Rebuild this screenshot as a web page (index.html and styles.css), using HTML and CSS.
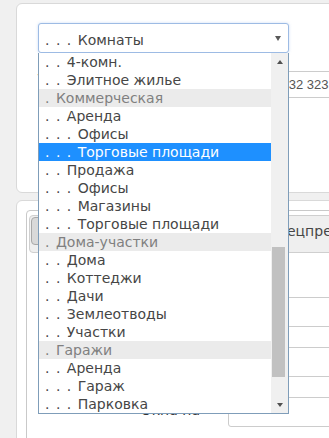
FILE: index.html
```html
<!DOCTYPE html>
<html lang="ru">
<head>
    <meta charset="UTF-8">
    <meta name="viewport" content="width=device-width, initial-scale=1.0">
    <title>Объект недвижимости</title>
    <link rel="stylesheet" href="styles.css">
</head>
<body>
    <div class="page">
        <div class="card card-top">
            <div class="select-wrap">
                <div class="select">
                    <span class="select-text"><span class="lvl">. . . </span>Комнаты</span>
                    <span class="arrow-down"></span>
                </div>
                <div class="dropdown">
                    <ul class="options">
                        <li><span class="lvl">. . </span>4-комн.</li>
                        <li><span class="lvl">. . </span>Элитное жилье</li>
                        <li class="group"><span class="lvl">. </span>Коммерческая</li>
                        <li><span class="lvl">. . </span>Аренда</li>
                        <li><span class="lvl">. . . </span>Офисы</li>
                        <li class="active"><span class="lvl">. . . </span>Торговые площади</li>
                        <li><span class="lvl">. . </span>Продажа</li>
                        <li><span class="lvl">. . . </span>Офисы</li>
                        <li><span class="lvl">. . . </span>Магазины</li>
                        <li><span class="lvl">. . . </span>Торговые площади</li>
                        <li class="group"><span class="lvl">. </span>Дома-участки</li>
                        <li><span class="lvl">. . </span>Дома</li>
                        <li><span class="lvl">. . </span>Коттеджи</li>
                        <li><span class="lvl">. . </span>Дачи</li>
                        <li><span class="lvl">. . </span>Землеотводы</li>
                        <li><span class="lvl">. . </span>Участки</li>
                        <li class="group"><span class="lvl">. </span>Гаражи</li>
                        <li><span class="lvl">. . </span>Аренда</li>
                        <li><span class="lvl">. . . </span>Гараж</li>
                        <li><span class="lvl">. . . </span>Парковка</li>
                    </ul>
                    <div class="scrollbar">
                        <div class="sb-btn"><span class="sb-up"></span></div>
                        <div class="sb-track"><div class="sb-thumb"></div></div>
                        <div class="sb-btn"><span class="sb-down"></span></div>
                    </div>
                </div>
            </div>
            <div class="form-row phone-row">
                <label>Телефон</label>
                <div class="input phone">8 (932) 32 323 23</div>
            </div>
        </div>

        <div class="card card-bottom">
            <div class="box">
                <div class="tabs">
                    <span class="tab tab-active">Основное</span>
                    <span class="tab tab-special">Спецпредложение</span>
                </div>
                <div class="form">
                    <label>Цена</label>
                    <div class="input"></div>
                    <label>Площадь</label>
                    <div class="input"></div>
                    <label class="label-low">Окна на</label>
                    <div class="input"></div>
                </div>
            </div>
        </div>
    </div>
</body>
</html>
```

FILE: styles.css
```css
html, body {
    overflow: hidden;
}
body {
    margin: 0;
    background-color: #f0f0f0;
    font-family: "DejaVu Sans", sans-serif;
    font-size: 14px;
    color: #464646;
}
.page {
    padding: 3px 0 0 16px;
    width: 360px;
}
.card {
    box-sizing: border-box;
    width: 340px;
    background-color: #fff;
    border: 1px solid #d9d9d9;
    border-radius: 6px;
}
.card-top {
    height: 190px;
    padding: 19px 0 0 21px;
}
.card-bottom {
    margin-top: 7px;
    height: 260px;
    padding: 9px 0 0 9px;
}

/* select with the open list */
.select-wrap {
    position: relative;
    width: 251px;
}
.select {
    box-sizing: border-box;
    height: 30px;
    display: flex;
    align-items: center;
    justify-content: space-between;
    padding: 4px 7px 0 6px;
    border: 1px solid #9dbbe4;
    border-radius: 3px;
    box-shadow: 0 0 3px rgba(110, 160, 225, 0.35);
    background-color: #fff;
}
.select-text {
    white-space: nowrap;
}
.lvl {
    letter-spacing: 1px;
}
.arrow-down {
    margin-top: -3px;
    border-left: 3.5px solid transparent;
    border-right: 3.5px solid transparent;
    border-top: 5px solid #5a5a5a;
}
.dropdown {
    position: absolute;
    left: 0;
    top: 30px;
    z-index: 10;
    box-sizing: border-box;
    width: 251px;
    height: 361px;
    display: flex;
    background-color: #fff;
    border: 1px solid #7f9db9;
    border-top: none;
}
.options {
    flex: 1;
    list-style: none;
    margin: 0;
    padding: 0;
    overflow: hidden;
}
.options li {
    height: 18px;
    line-height: 18px;
    padding-left: 6px;
    white-space: nowrap;
}
.options li.group {
    background-color: #ebebeb;
    color: #808080;
}
.options li.active {
    background-color: #1e90ff;
    color: #fff;
}
.scrollbar {
    width: 17px;
    display: flex;
    flex-direction: column;
    background-color: #f0f0f0;
}
.sb-btn {
    height: 17px;
    display: flex;
    align-items: center;
    justify-content: center;
}
.sb-up {
    border-left: 3.5px solid transparent;
    border-right: 3.5px solid transparent;
    border-bottom: 4px solid #505050;
}
.sb-down {
    border-left: 3.5px solid transparent;
    border-right: 3.5px solid transparent;
    border-top: 4px solid #505050;
}
.sb-track {
    flex: 1;
}
.sb-thumb {
    width: 13px;
    height: 130px;
    margin: 177px 0 0 1px;
    background-color: #c1c1c1;
}

/* form rows */
.form-row {
    display: grid;
    grid-template-columns: 182px 1fr;
    gap: 8px;
}
.phone-row {
    margin-top: 18px;
}
.input {
    box-sizing: border-box;
    height: 30px;
    border: 1px solid #cccccc;
    border-radius: 3px;
    background-color: #fff;
}
.phone {
    height: 27px;
    padding: 0 15px;
    line-height: 25px;
    font-family: "Liberation Sans", Arial, sans-serif;
    font-size: 13px;
    color: #555;
    white-space: nowrap;
}

/* tabs box */
.box {
    box-sizing: border-box;
    height: 300px;
    padding: 4px 0 0 2px;
    border: 1px solid #c9c9c9;
    border-radius: 4px;
}
.tabs {
    box-sizing: border-box;
    height: 38px;
    display: flex;
    align-items: flex-start;
    padding: 1px 0 0 1px;
    border: 1px solid #cfcfcf;
    border-radius: 4px;
    background-color: #efefef;
}
.tab {
    height: 26px;
    line-height: 26px;
    padding: 0 12px;
    border: 1px solid transparent;
    border-radius: 4px;
    white-space: nowrap;
}
.tab-active {
    background-color: #d9d9d9;
    border-color: #a8a8a8;
}
.tab-special {
    margin-left: 127px;
}
.form {
    margin-top: 44px;
    display: grid;
    grid-template-columns: 171px 1fr;
    gap: 20px 28px;
}
.form label {
    text-align: right;
    line-height: 30px;
    color: #333;
}
.form .label-low {
    line-height: 18px;
    padding-top: 4px;
}
```
